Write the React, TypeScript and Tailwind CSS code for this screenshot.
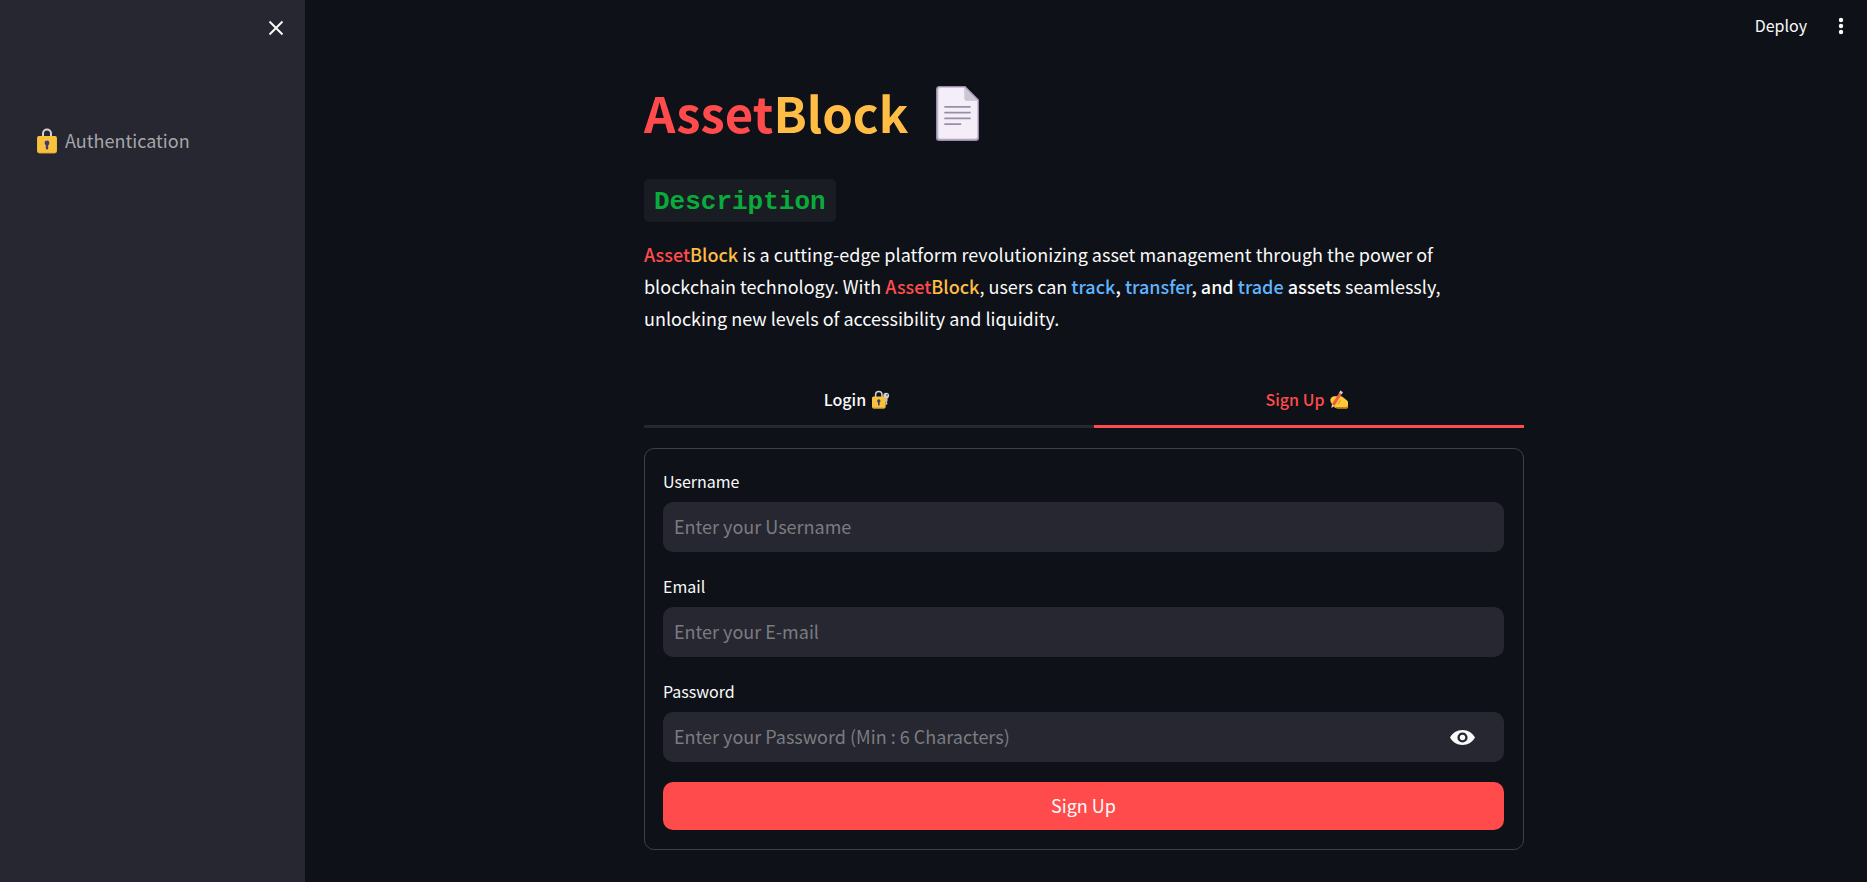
import { useState } from "react";
import type { ReactNode } from "react";

function LockIcon() {
  return (
    <svg viewBox="0 0 20 26" className="h-[26px] w-5 shrink-0" aria-hidden="true">
      <path d="M6 10V5.5a4 4 0 0 1 8 0V10" fill="none" stroke="#d3d3d3" strokeWidth="2" />
      <rect x="0" y="8" width="20" height="17.5" rx="2.4" fill="#ca9632" />
      <rect x="0.2" y="8" width="19.6" height="16.8" rx="2.2" fill="#f9c23c" />
      <circle cx="10" cy="15" r="2.4" fill="#433b6b" />
      <rect x="8.8" y="15" width="2.4" height="6.6" rx="1.1" fill="#433b6b" />
    </svg>
  );
}

function LockKeyIcon() {
  return (
    <svg viewBox="0 0 18 19" className="h-[19px] w-[18px]" aria-hidden="true">
      <path d="M11.6 12.5 14.4 8" stroke="#9b9b9b" strokeWidth="2.6" />
      <circle cx="14.2" cy="5.6" r="2.9" fill="#d3d3d3" />
      <circle cx="15" cy="5" r="0.9" fill="#636363" />
      <path d="M13.6 8v7.6l1.8-1.6v-1l-.8-.8.9-1V8z" fill="#c4c4c4" />
      <path d="M3.6 7V4.8a3.2 3.2 0 0 1 6.4 0V7" fill="none" stroke="#d3d3d3" strokeWidth="1.5" />
      <rect x="0" y="6.4" width="13.6" height="12" rx="1.6" fill="#f9c23c" />
      <path d="M0 16.2v.6A1.6 1.6 0 0 0 1.6 18.4H12a1.6 1.6 0 0 0 1.6-1.6v-.6c0 .8-.7 1.4-1.6 1.4H1.6C.7 17.6 0 17 0 16.2z" fill="#ca9632" />
      <circle cx="6.8" cy="11" r="1.7" fill="#433b6b" />
      <rect x="6" y="11" width="1.6" height="4.6" rx="0.7" fill="#433b6b" />
    </svg>
  );
}

function WritingHandIcon() {
  return (
    <svg viewBox="0 0 18 19" className="h-[19px] w-[18px]" aria-hidden="true">
      <path
        d="M.4 9.200C.8 7.600 2.400 6.400 4.400 6.200L9.800 6c1 0 1.800.2 2.600.8l4.400 3.400c.8.6 1.200 1.200 1.200 2v5c0 .8-.5 1.200-1.200 1.200H7.600c-2 0-3.200-.8-3.400-2L1.600 13.400C.8 12.400 0 10.800.4 9.200z"
        fill="#ffc83d"
      />
      <path d="M5 16.800c.4.900 1.200 1.400 2.600 1.400h9.200c.8 0 1.200-.5 1.200-1.200v-.6c-3 .6-9 .8-13 .4z" fill="#d67d00" />
      <path d="M10.600 10.400 8 14" stroke="#d67d00" strokeWidth="0.8" fill="none" />
      <path d="M3.200 15 10.600 3.200" stroke="#ee5a3c" strokeWidth="3" />
      <path d="M10.400 3.500 11.700 1.400" stroke="#d6cfe0" strokeWidth="3" />
      <path d="M1.900 14.300 1.400 18 4.500 15.900z" fill="#f3d6b0" />
    </svg>
  );
}

function PageIcon() {
  return (
    <svg viewBox="0 0 43 55" className="h-[55px] w-[43px]" aria-hidden="true">
      <path d="M3.500 0H29L43 14V52a3 3 0 0 1-3 3H3a3 3 0 0 1-3-3V3.500A3.500 3.500 0 0 1 3.500 0z" fill="#9b8bab" />
      <path d="M3.500 1H28.500L42 14.500V51.500a2 2 0 0 1-2 2H3.300a2 2 0 0 1-2-2V3.500A2.300 2.300 0 0 1 3.500 1z" fill="#cdc4d6" />
      <path d="M4.500 2H28.500V12.500a2 2 0 0 0 2 2H41V50.500a2 2 0 0 1-2 2H4.500a2 2 0 0 1-2-2V4a2 2 0 0 1 2-2z" fill="#f3eef8" />
      <path d="M28.500 1.500 42 14.800H31a2.500 2.500 0 0 1-2.500-2.500z" fill="#cdc4d6" />
      <path d="M29 0 43 14" stroke="#9b8bab" strokeWidth="0.8" />
      <path d="M9 20.800H34M9 26.600H34M9 32.400H34M9 38.200H24.500" stroke="#998ea4" strokeWidth="1.7" strokeLinecap="round" />
    </svg>
  );
}

function EyeIcon() {
  return (
    <svg viewBox="0 0 25 15" className="h-[15px] w-[25px]" aria-hidden="true">
      <path
        fill="#fafafa"
        fillRule="evenodd"
        d="M12.500 0C7 0 2.300 3 0 7.500 2.300 12 7 15 12.500 15S22.700 12 25 7.500C22.700 3 18 0 12.500 0zm0 2.400a5.100 5.100 0 1 1 0 10.200 5.100 5.100 0 0 1 0-10.200z"
      />
      <circle cx="12.5" cy="7.5" r="2.7" fill="#fafafa" />
    </svg>
  );
}

function Brand() {
  return (
    <strong className="font-medium">
      <span className="text-[#ff4b4b]">Asset</span>
      <span className="text-[#ffbd45]">Block</span>
    </strong>
  );
}

type FieldProps = {
  id: string;
  label: string;
  placeholder: string;
  type?: string;
  children?: ReactNode;
};

function Field({ id, label, placeholder, type = "text", children }: FieldProps) {
  return (
    <div>
      <label htmlFor={id} className="block h-[35px] text-[16px] leading-7">
        {label}
      </label>
      <div className="flex h-[50px] items-center rounded-[10px] bg-[#262730]">
        <input
          id={id}
          type={type}
          placeholder={placeholder}
          className="h-full min-w-0 flex-1 bg-transparent px-[11px] pb-0.5 text-[18px] text-[#fafafa] outline-none placeholder:text-[#7b7c81]"
        />
        {children}
      </div>
    </div>
  );
}

export default function App() {
  const [tab, setTab] = useState<"login" | "signup">("signup");
  const [visible, setVisible] = useState(false);

  const tabClass = (name: "login" | "signup") =>
    name === tab
      ? "flex h-[53px] flex-1 items-center justify-center gap-1.5 border-b-3 border-[#ff4b4b] pr-1 pb-0.5 text-[#ff4b4b]"
      : "flex h-[53px] flex-1 items-center justify-center gap-1.5 border-b-3 border-transparent pr-1 pb-0.5 text-[#fafafa]";

  return (
    <div className="flex min-h-screen bg-[#0e1117] font-['Noto_Sans_CJK_SC',sans-serif] text-[#fafafa]">
      <aside className="w-[305px] shrink-0 bg-[#262730]">
        <div className="flex justify-end px-[21px] pt-[20px]">
          <button type="button" aria-label="Close sidebar">
            <svg viewBox="0 0 16 16" className="size-4" aria-hidden="true">
              <path d="M1.500 1.500 14.500 14.500M14.500 1.500 1.500 14.500" stroke="#fafafa" strokeWidth="2" />
            </svg>
          </button>
        </div>
        <nav className="px-[37px] pt-[92px]">
          <a href="#authentication" className="flex items-center gap-2 text-[18px] leading-6 text-[#a5a6aa]">
            <LockIcon />
            <span className="pb-0.5">Authentication</span>
          </a>
        </nav>
      </aside>

      <div className="min-w-0 flex-1 pr-1">
        <header className="flex h-[52px] items-center justify-end gap-[30px] pr-[18px]">
          <button type="button" className="pb-0.5 text-[16px]">
            Deploy
          </button>
          <button type="button" aria-label="Main menu">
            <svg viewBox="0 0 8 18" className="h-[18px] w-2" aria-hidden="true">
              <circle cx="4" cy="3" r="2.2" fill="#fafafa" />
              <circle cx="4" cy="9" r="2.2" fill="#fafafa" />
              <circle cx="4" cy="15" r="2.2" fill="#fafafa" />
            </svg>
          </button>
        </header>

        <main className="mx-auto w-full max-w-[880px] pt-[29px]">
          <h1 className="flex h-[64px] items-center gap-7 text-[49px] leading-[64px] font-bold">
            <span className="pb-0.5">
              <span className="text-[#ff4b4b]">Asset</span>
              <span className="text-[#ffbd45]">Block</span>
            </span>
            <PageIcon />
          </h1>

          <h2 className="mt-[34px] flex">
            <code className="rounded-[5px] bg-[#1a1c24] px-[10px] pt-[3px] font-['Liberation_Mono',monospace] text-[26px] leading-10 font-bold text-[#09ab3b]">
              Description
            </code>
          </h2>

          <p className="mt-4 text-[18px] leading-8">
            <Brand /> is a cutting-edge platform revolutionizing asset management through the power of blockchain
            technology. With <Brand />, users can{" "}
            <strong className="font-medium">
              <span className="text-[#60b4ff]">track</span>, <span className="text-[#60b4ff]">transfer</span>, and{" "}
              <span className="text-[#60b4ff]">trade</span> assets
            </strong>{" "}
            seamlessly, unlocking new levels of accessibility and liquidity.
          </p>

          <div
            role="tablist"
            className="mt-[41px] flex gap-5 bg-[linear-gradient(#262730,#262730)] bg-[length:100%_3px] bg-bottom bg-no-repeat text-[16px] font-medium"
          >
            <button type="button" role="tab" aria-selected={tab === "login"} onClick={() => setTab("login")} className={tabClass("login")}>
              Login <LockKeyIcon />
            </button>
            <button type="button" role="tab" aria-selected={tab === "signup"} onClick={() => setTab("signup")} className={tabClass("signup")}>
              Sign Up <WritingHandIcon />
            </button>
          </div>

          <form
            onSubmit={(event) => event.preventDefault()}
            className="mt-5 flex flex-col gap-5 rounded-[10px] border border-[#3d4045] pt-[18px] pr-[19px] pb-[19px] pl-[18px]"
          >
            <Field id="username" label="Username" placeholder="Enter your Username" />
            <Field id="email" label="Email" placeholder="Enter your E-mail" />
            <Field
              id="password"
              label="Password"
              type={visible ? "text" : "password"}
              placeholder="Enter your Password (Min : 6 Characters)"
            >
              <button type="button" aria-label="Show password" onClick={() => setVisible(!visible)} className="px-[29px]">
                <EyeIcon />
              </button>
            </Field>
            <button type="submit" className="h-12 rounded-[10px] bg-[#ff4b4b] pb-0.5 text-[18px]">
              Sign Up
            </button>
          </form>
        </main>
      </div>
    </div>
  );
}
